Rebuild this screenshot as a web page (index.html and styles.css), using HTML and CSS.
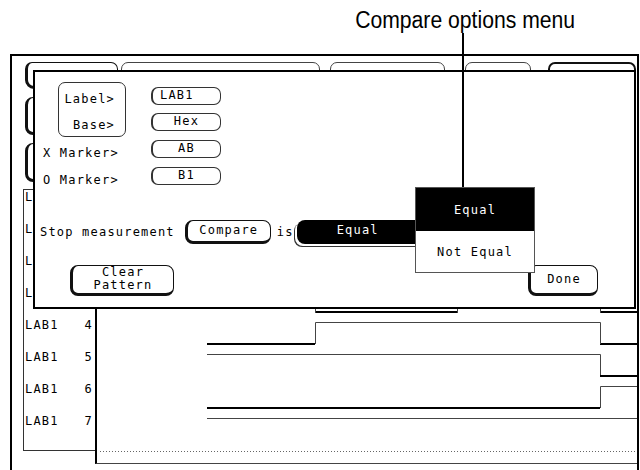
FILE: index.html
```html
<!DOCTYPE html>
<html lang="en">
<head>
    <meta charset="UTF-8">
    <title>Compare options menu</title>
    <link rel="stylesheet" href="styles.css">
</head>
<body>
    <div class="caption"><span>Compare options menu</span></div>
    <div class="pointer"></div>

    <div class="screen">
        <div class="topbar">
            <div class="tab tab-main"></div>
            <div class="tab tab-2"></div>
            <div class="tab tab-3"></div>
            <div class="tab tab-4"></div>
            <div class="tab tab-5"></div>
        </div>

        <div class="sidebar">
            <div class="side-btn"></div>
            <div class="side-btn tall"></div>
        </div>

        <div class="display">
            <div class="labels">
                <!-- rows 0-3 sit under the dialog, only the first letter shows -->
                <div class="lab"><span>L</span></div>
                <div class="lab"><span>L</span></div>
                <div class="lab"><span>L</span></div>
                <div class="lab"><span>L</span></div>
                <div class="lab"><span>LAB1</span><span>4</span></div>
                <div class="lab"><span>LAB1</span><span>5</span></div>
                <div class="lab"><span>LAB1</span><span>6</span></div>
                <div class="lab"><span>LAB1</span><span>7</span></div>
            </div>
            <div class="waves">
                <svg width="540" height="274" viewBox="97 189 540 274">
                    <!-- channel 3 -->
                    <path class="hi" d="M207 290.5 H315 M457 290.5 H600"/>
                    <path class="lo" d="M315 312 H457 M600 312 H637"/>
                    <path class="edge" d="M315.5 290 V313 M457.5 290 V313 M600.5 290 V313"/>
                    <!-- channel 4 -->
                    <path class="lo" d="M207 344 H315 M600 344 H637"/>
                    <path class="hi" d="M315.5 344 V322.5 H600.5 V344"/>
                    <!-- channel 5 -->
                    <path class="hi" d="M207 354.5 H600.5 V376"/>
                    <path class="lo" d="M600 376 H637"/>
                    <!-- channel 6 -->
                    <path class="lo" d="M207 408 H600"/>
                    <path class="hi" d="M600.5 408 V386.5 H637"/>
                    <!-- channel 7 -->
                    <path class="hi" d="M207 418.5 H637"/>
                    <path class="dots" d="M100 451.5 H637"/>
                </svg>
            </div>
        </div>

        <div class="dialog">
            <div class="dlg-grid">
                <div class="field-box">
                    <span>Label&gt;</span>
                    <span>Base&gt;</span>
                </div>
                <div class="btn-stack">
                    <div class="pill left">LAB1</div>
                    <div class="pill">Hex</div>
                </div>
                <div class="marker">X Marker&gt;</div>
                <div class="pill">AB</div>
                <div class="marker">O Marker&gt;</div>
                <div class="pill">B1</div>
            </div>

            <div class="stop-row">
                <span>Stop measurement</span>
                <div class="raised compare">Compare</div>
                <span class="is">is</span>
                <div class="equal">Equal</div>
            </div>

            <div class="dlg-actions">
                <div class="raised clear">Clear<br>Pattern</div>
                <div class="raised done">Done</div>
            </div>

            <div class="menu">
                <div class="menu-item sel">Equal</div>
                <div class="menu-item">Not Equal</div>
            </div>
        </div>
    </div>
</body>
</html>
```

FILE: styles.css
```css
body {
    margin: 0;
    width: 640px;
    height: 470px;
    overflow: hidden;
    background: white;
    color: #000;
    font-family: "DejaVu Sans Mono", monospace;
    font-size: 12px;
    letter-spacing: 1.2px;
}

.caption {
    height: 54px;
    box-sizing: border-box;
    padding: 7px 65px 0 0;
    text-align: right;
    font-family: "Liberation Sans Narrow", "Liberation Sans", sans-serif;
    font-size: 23px;
    line-height: 26px;
    letter-spacing: 0;
}

.caption span {
    display: inline-block;
    transform: scaleX(0.92);
    transform-origin: right center;
}

/* leader line from the caption down to the menu */
.pointer {
    position: absolute;
    left: 462px;
    top: 33px;
    width: 2px;
    height: 154px;
    background: #000;
    z-index: 5;
}

.screen {
    position: relative;
    margin-left: 10px;
    width: 629px;
    height: 420px;
    box-sizing: border-box;
    border: 2px solid #000;
    border-bottom: none;
}

.topbar {
    display: flex;
    margin-top: 6px;
    height: 27px;
}

.tab {
    height: 27px;
    box-sizing: border-box;
    border: 1px solid #444;
    border-radius: 7px 7px 0 0;
}

.tab-main {
    margin-left: 13px;
    width: 93px;
    border-color: #111;
    border-left-width: 3px;
    border-bottom-width: 3px;
    border-radius: 7px 7px 7px 9px;
}

.tab-2 { margin-left: 3px; width: 199px; }
.tab-3 { margin-left: 10px; width: 115px; }
.tab-4 { margin-left: 20px; width: 66px; }
.tab-5 { margin-left: 17px; width: 88px; border-width: 2px; border-color: #111; }

.sidebar {
    display: flex;
    flex-direction: column;
    gap: 8px;
    margin: 8px 0 0 13px;
}

.side-btn {
    width: 60px;
    height: 38px;
    box-sizing: border-box;
    border: 1px solid #111;
    border-left-width: 3px;
    border-bottom-width: 3px;
    border-radius: 8px;
}

.side-btn.tall {
    height: 39px;
}

.display {
    display: flex;
    margin: 7px 0 0 11px;
    height: 275px;
}

.labels {
    width: 72px;
    height: 262px;
    box-sizing: border-box;
    border: 1px solid #333;
    border-right: none;
}

.lab {
    display: flex;
    justify-content: space-between;
    height: 32px;
    padding: 0 2px 0 1px;
    line-height: 14px;
}

.waves {
    flex: 1;
    box-sizing: border-box;
    border-left: 2px solid #000;
    border-bottom: 1px solid #444;
}

.waves svg {
    display: block;
}

.waves path {
    fill: none;
}

.hi, .edge {
    stroke: #444;
    stroke-width: 1;
}

.lo {
    stroke: #000;
    stroke-width: 2;
}

.dots {
    stroke: #666;
    stroke-width: 1;
    stroke-dasharray: 1 2;
}

.dialog {
    position: absolute;
    left: 21px;
    top: 14px;
    width: 603px;
    height: 239px;
    box-sizing: border-box;
    border: 2px solid #000;
    background: white;
    z-index: 2;
}

.dlg-grid {
    display: grid;
    grid-template-columns: 108px 70px;
    grid-template-rows: 58px 27px 18px;
    margin: 10px 0 0 8px;
}

.field-box {
    margin-left: 15px;
    width: 68px;
    height: 55px;
    box-sizing: border-box;
    border: 1px solid #333;
    border-radius: 7px;
    display: flex;
    flex-direction: column;
    align-items: flex-end;
    gap: 10px;
    padding: 8px 10px 0 0;
    line-height: 16px;
}

.btn-stack {
    display: flex;
    flex-direction: column;
    gap: 8px;
    margin-top: 5px;
}

.pill {
    height: 18px;
    box-sizing: border-box;
    border: 1px solid #333;
    border-left-width: 2px;
    border-radius: 7px;
    line-height: 14px;
    text-align: center;
}

.pill.left {
    text-align: left;
    padding-left: 7px;
}

.marker {
    margin-top: 5px;
    line-height: 16px;
}

.stop-row {
    display: flex;
    align-items: center;
    height: 24px;
    margin: 35px 0 0 5px;
}

.raised {
    box-sizing: border-box;
    border: 1px solid #111;
    border-left-width: 3px;
    border-bottom-width: 3px;
    border-radius: 8px;
    text-align: center;
}

.compare {
    margin-left: 10px;
    width: 86px;
    height: 24px;
    line-height: 19px;
}

.is {
    margin-left: 6px;
}

.equal {
    margin-left: 3px;
    width: 145px;
    height: 24px;
    box-sizing: border-box;
    padding-left: 40px;
    background: #000;
    color: #fff;
    border-radius: 8px;
    line-height: 20px;
    box-shadow: -2px 2px 0 0 #fff, -3px 3px 0 0 #333;
}

.dlg-actions {
    display: flex;
    justify-content: space-between;
    margin-top: 21px;
    padding: 0 36px 0 35px;
}

.clear {
    width: 104px;
    height: 31px;
    line-height: 13px;
}

.done {
    width: 70px;
    height: 31px;
    line-height: 27px;
}

.menu {
    position: absolute;
    left: 380px;
    top: 115px;
    width: 120px;
    height: 86px;
    box-sizing: border-box;
    border: 1px solid #555;
    background: white;
    display: flex;
    flex-direction: column;
    z-index: 3;
}

.menu-item {
    flex: 1;
    display: flex;
    align-items: center;
    justify-content: center;
}

.menu-item.sel {
    flex: 0 0 43px;
    background: #000;
    color: #fff;
}
```
